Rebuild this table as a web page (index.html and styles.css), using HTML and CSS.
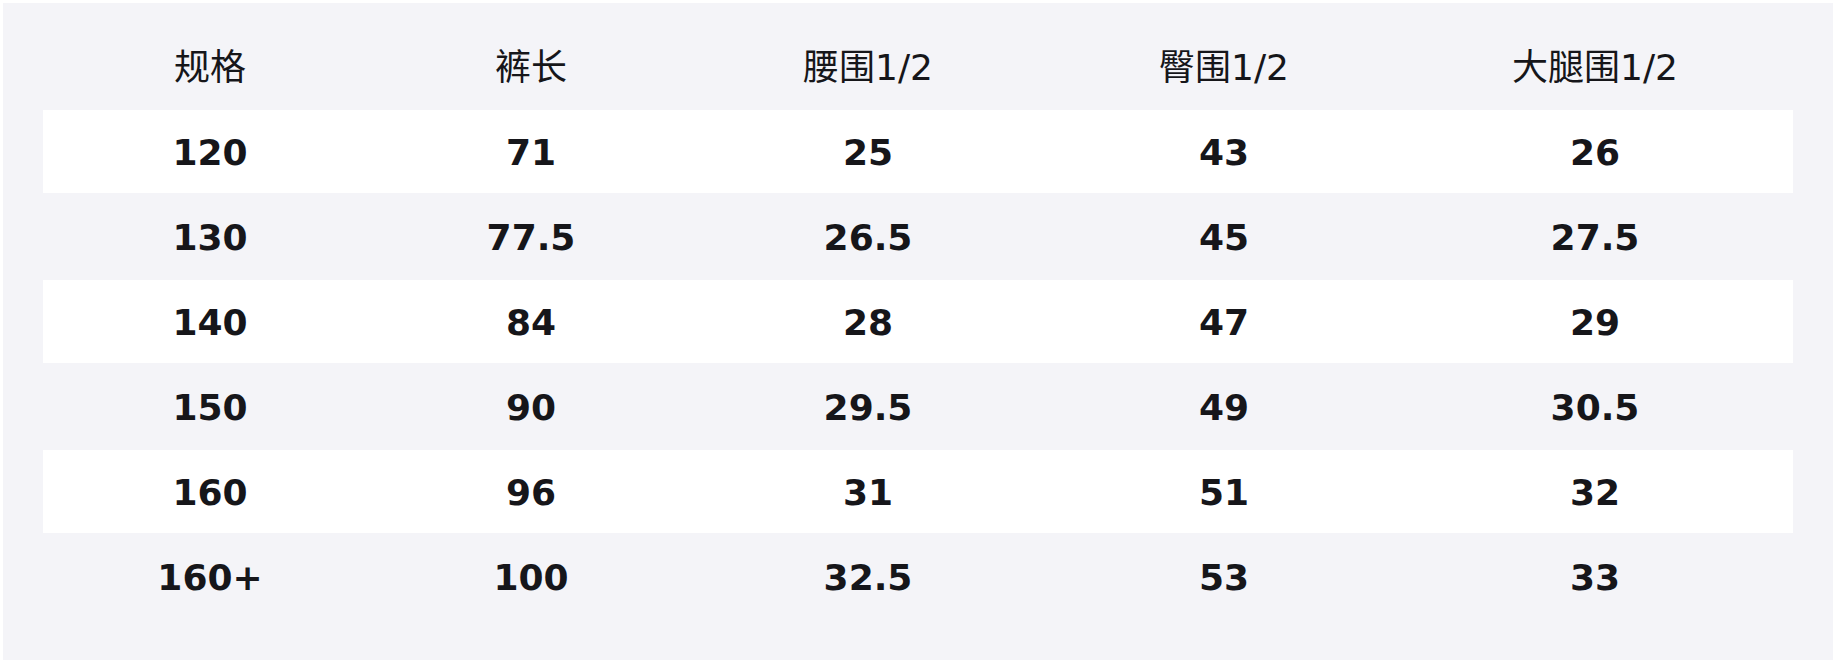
FILE: index.html
```html
<!DOCTYPE html>
<html lang="zh-CN">
<head>
<meta charset="utf-8">
<title>尺码表</title>
<link rel="stylesheet" href="styles.css">
</head>
<body>
<div class="panel">
  <table class="size-table">
    <thead>
      <tr><th>规格</th><th>裤长</th><th>腰围1/2</th><th>臀围1/2</th><th>大腿围1/2</th></tr>
    </thead>
    <tbody>
      <tr class="odd"><td>120</td><td>71</td><td>25</td><td>43</td><td>26</td></tr>
      <tr><td>130</td><td>77.5</td><td>26.5</td><td>45</td><td>27.5</td></tr>
      <tr class="odd"><td>140</td><td>84</td><td>28</td><td>47</td><td>29</td></tr>
      <tr><td>150</td><td>90</td><td>29.5</td><td>49</td><td>30.5</td></tr>
      <tr class="odd"><td>160</td><td>96</td><td>31</td><td>51</td><td>32</td></tr>
      <tr><td>160+</td><td>100</td><td>32.5</td><td>53</td><td>33</td></tr>
    </tbody>
  </table>
</div>
</body>
</html>
```
FILE: styles.css
```css
html, body {
  background: #ffffff;
}
body {
  margin: 3px;
  font-family: "DejaVu Sans", "Noto Sans CJK SC", sans-serif;
  color: #16161a;
}
.panel {
  background: #f4f4f8;
  padding: 40px;
  height: 657px;
  box-sizing: border-box;
}
.size-table {
  width: 1750px;
  border-collapse: separate;
  border-spacing: 0 2px;
  table-layout: fixed;
}
.size-table th,
.size-table td {
  text-align: center;
  font-size: 36px;
  line-height: 44px;
}
.size-table th {
  font-weight: normal;
  padding: 1px 0 18px;
}
.size-table td {
  font-weight: bold;
  padding: 21px 0 18px;
}
.size-table tr.odd td {
  background: #ffffff;
}
.size-table th:nth-child(1) { width: 334px; }
.size-table th:nth-child(2) { width: 308px; }
.size-table th:nth-child(3) { width: 366px; }
.size-table th:nth-child(4) { width: 346px; }
.size-table th:nth-child(5) { width: 396px; }
```
